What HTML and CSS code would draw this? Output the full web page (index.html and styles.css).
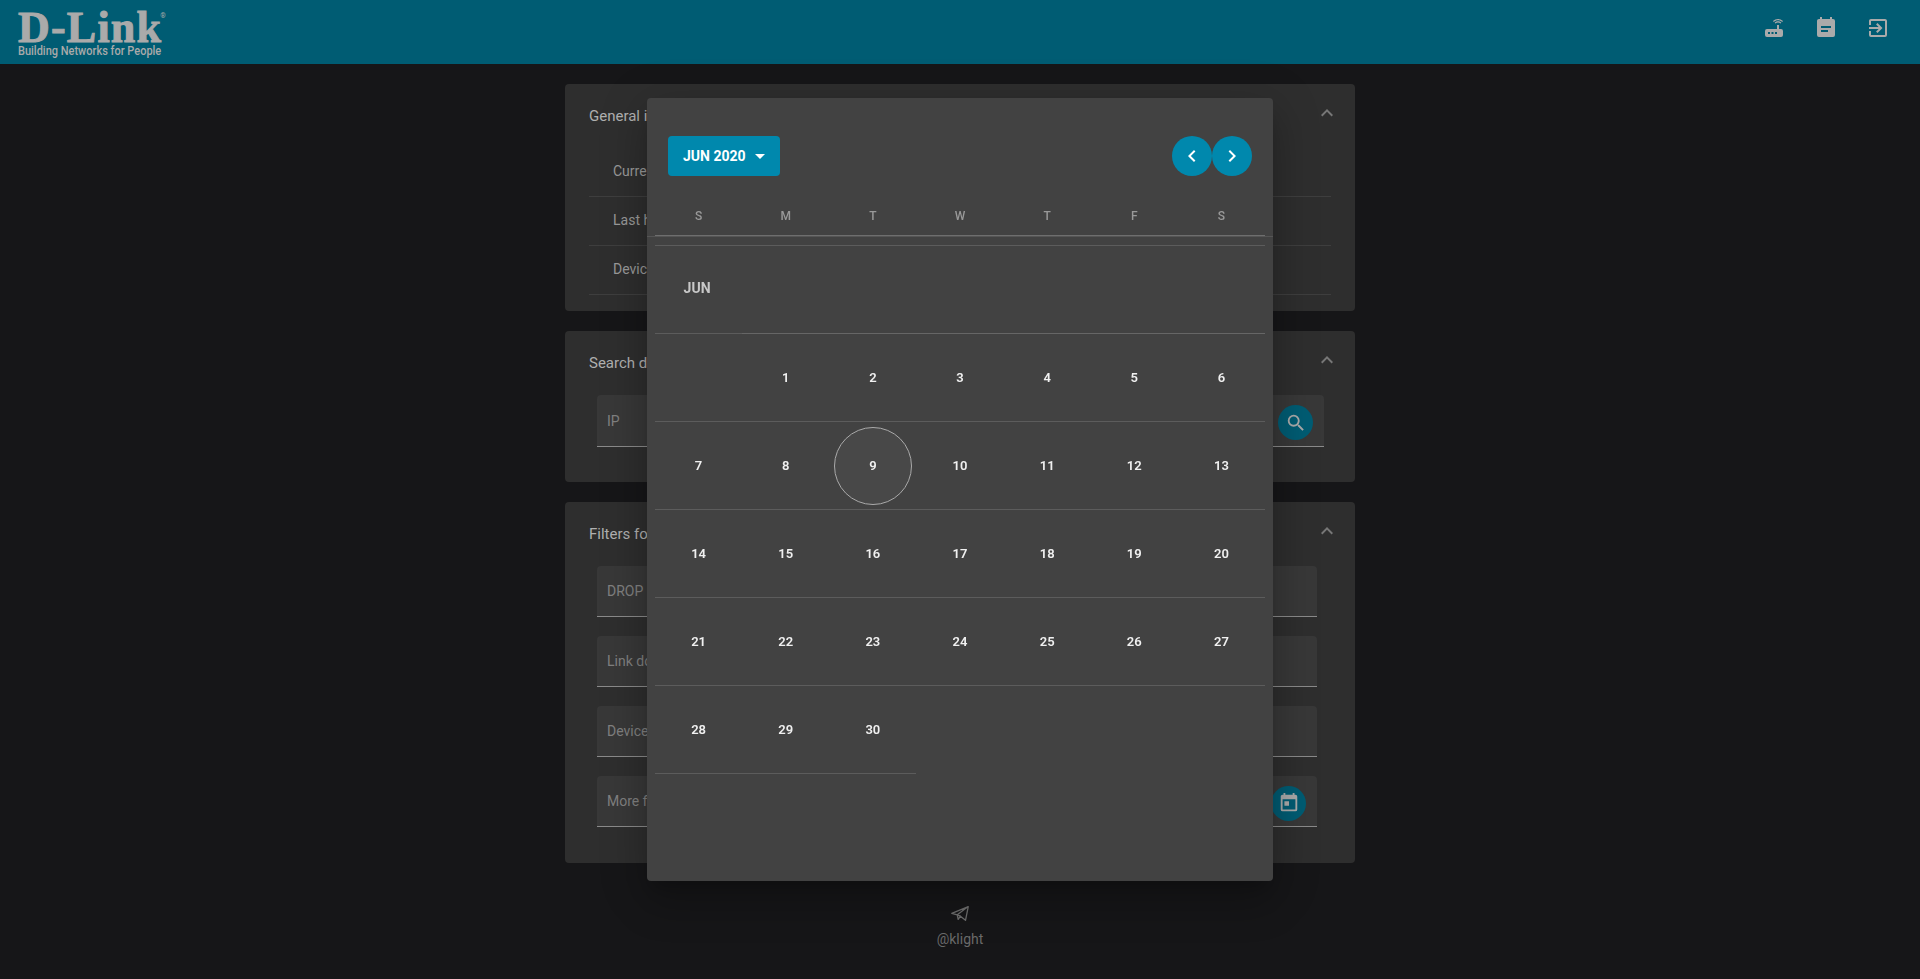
FILE: index.html
```html
<!DOCTYPE html>
<html lang="en">
<head>
<meta charset="utf-8">
<title>D-Link</title>
<link rel="stylesheet" href="styles.css">
</head>
<body>
<header class="topbar">
  <div class="logo">
    <div class="logo-word">D-Link<sup class="logo-r">®</sup></div>
    <div class="logo-tag">Building Networks for People</div>
  </div>
  <nav class="top-icons">
    <svg class="top-icon" viewBox="0 0 24 24"><path d="M20.2,5.9L21,5.1C19.6,3.7 17.8,3 16,3C14.2,3 12.4,3.7 11,5.1L11.8,5.9C13,4.8 14.5,4.2 16,4.2C17.5,4.2 19,4.8 20.2,5.9M19.3,6.7C18.4,5.8 17.2,5.3 16,5.3C14.8,5.3 13.6,5.8 12.7,6.7L13.5,7.5C14.2,6.8 15.1,6.5 16,6.5C16.9,6.5 17.8,6.8 18.5,7.5L19.3,6.7M19,13H17V9H15V13H5A2,2 0 0,0 3,15V19A2,2 0 0,0 5,21H19A2,2 0 0,0 21,19V15A2,2 0 0,0 19,13M8,18H6V16H8V18M11.5,18H9.5V16H11.5V18M15,18H13V16H15V18Z"/></svg>
    <svg class="top-icon" viewBox="0 0 24 24"><path d="M14 14H7V16H14M17 10H7V12H17M19 3H18V1H16V3H8V1H6V3H5C3.89 3 3 3.9 3 5V19A2 2 0 0 0 5 21H19A2 2 0 0 0 21 19V5A2 2 0 0 0 19 3Z" fill-rule="evenodd"/></svg>
    <svg class="top-icon" viewBox="0 0 24 24"><path d="M19,3H5C3.89,3 3,3.89 3,5V9H5V5H19V19H5V15H3V19A2,2 0 0,0 5,21H19A2,2 0 0,0 21,19V5C21,3.89 20.1,3 19,3M10.08,15.58L11.5,17L16.5,12L11.5,7L10.08,8.41L12.67,11H3V13H12.67L10.08,15.58Z"/></svg>
  </nav>
</header>

<main class="page">
  <section class="card card-info">
    <div class="card-head"><h2 class="card-title">General information</h2><svg class="chev" viewBox="0 0 24 24"><path d="M7.41,15.41L12,10.83L16.59,15.41L18,14L12,8L6,14L7.41,15.41Z"/></svg></div>
    <ul class="info-list">
      <li class="info-row">Current version</li>
      <li class="info-row">Last hour</li>
      <li class="info-row">Devices</li>
    </ul>
  </section>

  <section class="card card-search">
    <div class="card-head"><h2 class="card-title">Search device</h2><svg class="chev" viewBox="0 0 24 24"><path d="M7.41,15.41L12,10.83L16.59,15.41L18,14L12,8L6,14L7.41,15.41Z"/></svg></div>
    <div class="field field-search">
      <span class="field-label">IP</span>
      <span class="round-btn"><svg class="round-icon" viewBox="0 0 24 24"><path d="M9.5,3A6.5,6.5 0 0,1 16,9.5C16,11.11 15.41,12.59 14.44,13.73L14.71,14H15.5L20.5,19L19,20.5L14,15.5V14.71L13.73,14.44C12.59,15.41 11.11,16 9.5,16A6.5,6.5 0 0,1 3,9.5A6.5,6.5 0 0,1 9.5,3M9.5,5C7,5 5,7 5,9.5C5,12 7,14 9.5,14C12,14 14,12 14,9.5C14,7 12,5 9.5,5Z"/></svg></span>
    </div>
  </section>

  <section class="card card-filters">
    <div class="card-head"><h2 class="card-title">Filters for log</h2><svg class="chev" viewBox="0 0 24 24"><path d="M7.41,15.41L12,10.83L16.59,15.41L18,14L12,8L6,14L7.41,15.41Z"/></svg></div>
    <div class="filters">
      <div class="field"><span class="field-label">DROP</span></div>
      <div class="field"><span class="field-label">Link down</span></div>
      <div class="field"><span class="field-label">Device</span></div>
      <div class="field">
        <span class="field-label">More filters</span>
        <span class="round-btn"><svg class="round-icon" viewBox="0 0 24 24"><path d="M7,10H12V15H7M19,19H5V8H19M19,3H18V1H16V3H8V1H6V3H5C3.89,3 3,3.9 3,5V19A2,2 0 0,0 5,21H19A2,2 0 0,0 21,19V5A2,2 0 0,0 19,3Z"/></svg></span>
      </div>
    </div>
  </section>

  <footer class="credit">
    <svg class="plane" viewBox="0 0 24 24"><path d="M3 12.5L21 5L18 20L12.5 15.5L10 19L9 14ZM9 14L21 5"/><path d="M12.5 15.5L9 14"/></svg>
    <span>@klight</span>
  </footer>
</main>

<div class="dialog">
  <div class="picker-head">
    <button class="month-btn">JUN 2020<svg class="caret" viewBox="0 0 24 24"><path d="M7,10L12,15L17,10H7Z"/></svg></button>
    <div class="nav-btns">
      <span class="nav-btn"><svg class="nav-icon" viewBox="0 0 24 24"><path d="M15.41,16.58L10.83,12L15.41,7.41L14,6L8,12L14,18L15.41,16.58Z"/></svg></span>
      <span class="nav-btn"><svg class="nav-icon" viewBox="0 0 24 24"><path d="M8.59,16.58L13.17,12L8.59,7.41L10,6L16,12L10,18L8.59,16.58Z"/></svg></span>
    </div>
  </div>
  <div class="week-head">
    <span>S</span><span>M</span><span>T</span><span>W</span><span>T</span><span>F</span><span>S</span>
  </div>
  <div class="month">
    <div class="cell cell-line month-name">JUN</div>
    <div class="cell cell-line cell-wide"></div>

    <div class="cell cell-line"></div>
    <div class="cell cell-line day">1</div><div class="cell cell-line day">2</div><div class="cell cell-line day">3</div><div class="cell cell-line day">4</div><div class="cell cell-line day">5</div><div class="cell cell-line day">6</div>

    <div class="cell cell-line day">7</div><div class="cell cell-line day">8</div><div class="cell cell-line day"><span class="today">9</span></div><div class="cell cell-line day">10</div><div class="cell cell-line day">11</div><div class="cell cell-line day">12</div><div class="cell cell-line day">13</div>

    <div class="cell cell-line day">14</div><div class="cell cell-line day">15</div><div class="cell cell-line day">16</div><div class="cell cell-line day">17</div><div class="cell cell-line day">18</div><div class="cell cell-line day">19</div><div class="cell cell-line day">20</div>

    <div class="cell cell-line day">21</div><div class="cell cell-line day">22</div><div class="cell cell-line day">23</div><div class="cell cell-line day">24</div><div class="cell cell-line day">25</div><div class="cell cell-line day">26</div><div class="cell cell-line day">27</div>

    <div class="cell cell-line day">28</div><div class="cell cell-line day">29</div><div class="cell cell-line day">30</div>
  </div>
</div>
</body>
</html>
```
FILE: styles.css
```css
* { box-sizing: border-box; }
html, body { margin: 0; height: 100%; overflow: hidden; }
body {
  background: #161618;
  font-family: Roboto, "Liberation Sans", sans-serif;
  color: #aaa;
}

/* top bar */
.topbar {
  height: 64px;
  background: #005c73;
  display: flex;
  justify-content: space-between;
  align-items: center;
  padding: 0 30px 0 18px;
}
.logo { color: #aaa; width: 146px; padding-top: 4px; }
.logo-word {
  font-family: "Liberation Serif", serif;
  font-weight: 700;
  font-size: 44px;
  line-height: 29px;
  letter-spacing: 1.2px;
  -webkit-text-stroke: 1px #aaa;
  white-space: nowrap;
}
.logo-r { font-size: 7px; line-height: 0; vertical-align: 24px; -webkit-text-stroke: 0; font-family: Roboto, sans-serif; font-weight: 400; letter-spacing: 0; margin-left: -2px; }
.logo-tag {
  font-family: Roboto, sans-serif;
  font-size: 12.5px;
  font-weight: 500;
  line-height: 11px;
  margin-top: 3px;
  white-space: nowrap;
  transform: scaleX(0.88);
  transform-origin: left center;
}
.top-icons { display: flex; gap: 28px; align-items: center; margin-bottom: 8px; }
.top-icon { width: 24px; height: 24px; fill: #aaa; display: block; }

/* page */
.page {
  width: 790px;
  margin: 20px auto 0;
  display: flex;
  flex-direction: column;
  gap: 20px;
}
.card {
  background: #2e2e2e;
  border-radius: 4px;
  padding: 19px 24px 0;
}
.card-info { height: 227px; }
.card-search { height: 151px; }
.card-filters { height: 361px; }
.card-head { display: flex; justify-content: space-between; align-items: center; height: 24px; }
.card-title { margin: 0; padding-top: 1px; font-size: 15px; font-weight: 400; color: #b0b0b0; }
.chev { width: 24px; height: 24px; fill: #777; margin-right: -8px; margin-bottom: 4px; }
.info-list { list-style: none; margin: 21px 0 0; padding: 0; }
.info-row {
  height: 49px;
  padding: 0 24px;
  line-height: 46px;
  font-size: 14px;
  border-bottom: 1px solid #3e3e3e;
  color: #999;
}
.field {
  position: relative;
  margin-left: 8px;
  height: 51px;
  background: #383838;
  border-radius: 4px 4px 0 0;
  border-bottom: 1px solid #8a8a8a;
  display: flex;
  align-items: center;
  justify-content: space-between;
  padding: 0 11px 0 10px;
  width: 720px;
}
.field-search { width: 727px; height: 52px; margin-top: 21px; padding-right: 11px; }
.filters { display: flex; flex-direction: column; gap: 19px; margin-top: 21px; }
.field-label { font-size: 14px; color: #808080; }
.round-btn {
  width: 35px; height: 35px;
  border-radius: 50%;
  background: #005c73;
  display: flex; align-items: center; justify-content: center;
  margin-top: 4px;
}
.round-icon { width: 22px; height: 22px; fill: #aaa; }

.credit {
  display: flex;
  flex-direction: column;
  align-items: center;
  gap: 7px;
  margin-top: 19px;
  font-size: 14px;
  color: #6a6a6a;
}
.plane { width: 22px; height: 22px; fill: none; stroke: #6e6e6e; stroke-width: 1.4; stroke-linejoin: round; }

/* dialog */
.dialog {
  position: fixed;
  left: 647px;
  top: 98px;
  width: 626px;
  height: 783px;
  background: #424242;
  border-radius: 4px;
  overflow: hidden;
  box-shadow: 0 11px 15px -7px rgba(0,0,0,.2), 0 24px 38px 3px rgba(0,0,0,.14), 0 9px 46px 8px rgba(0,0,0,.12);
}
.picker-head {
  display: flex;
  justify-content: space-between;
  align-items: center;
  padding: 38px 21px 0;
  height: 78px;
}
.month-btn {
  width: 112px; height: 40px;
  border: 0;
  border-radius: 4px;
  background: #0088ad;
  color: #fff;
  font: 700 14px Roboto, sans-serif;
  display: flex; align-items: center;
  padding: 0 0 0 15px;
  white-space: nowrap;
}
.caret { width: 24px; height: 24px; fill: #fff; margin-left: 2px; }
.nav-btns { display: flex; }
.nav-btn {
  width: 40px; height: 40px;
  border-radius: 50%;
  background: #0088ad;
  display: flex; align-items: center; justify-content: center;
}
.nav-icon { width: 24px; height: 24px; fill: #fff; }
.week-head {
  height: 61px;
  padding: 33px 8px 0;
  display: grid;
  grid-template-columns: repeat(7, 1fr);
  align-items: start;
  position: relative;
  border-bottom: 1px solid #555;
  text-align: center;
  font-size: 12px;
  font-weight: 500;
  color: #999;
}
.week-head::after {
  content: "";
  position: absolute;
  left: 8px; right: 8px; bottom: 0;
  height: 1px;
  background: #6e6e6e;
}
.month {
  margin: 8px 8px 0;
  display: grid;
  grid-template-columns: repeat(7, 1fr);
  grid-auto-rows: 88px;
  border-top: 1px solid #5c5c5c;
}
.cell { display: flex; align-items: center; justify-content: center; }
.cell-line { border-bottom: 1px solid #5c5c5c; }
.cell-wide { grid-column: span 6; border-bottom-color: #666; }
.month-name { font-size: 14px; font-weight: 700; color: #c8c8c8; padding: 0 3px 4px 0; }
.day { font-size: 13px; font-weight: 600; color: #f0f0f0; }
.today {
  width: 78px; height: 78px;
  border-radius: 50%;
  border: 1px solid #aaa;
  background: #484848;
  display: flex; align-items: center; justify-content: center;
}
```
